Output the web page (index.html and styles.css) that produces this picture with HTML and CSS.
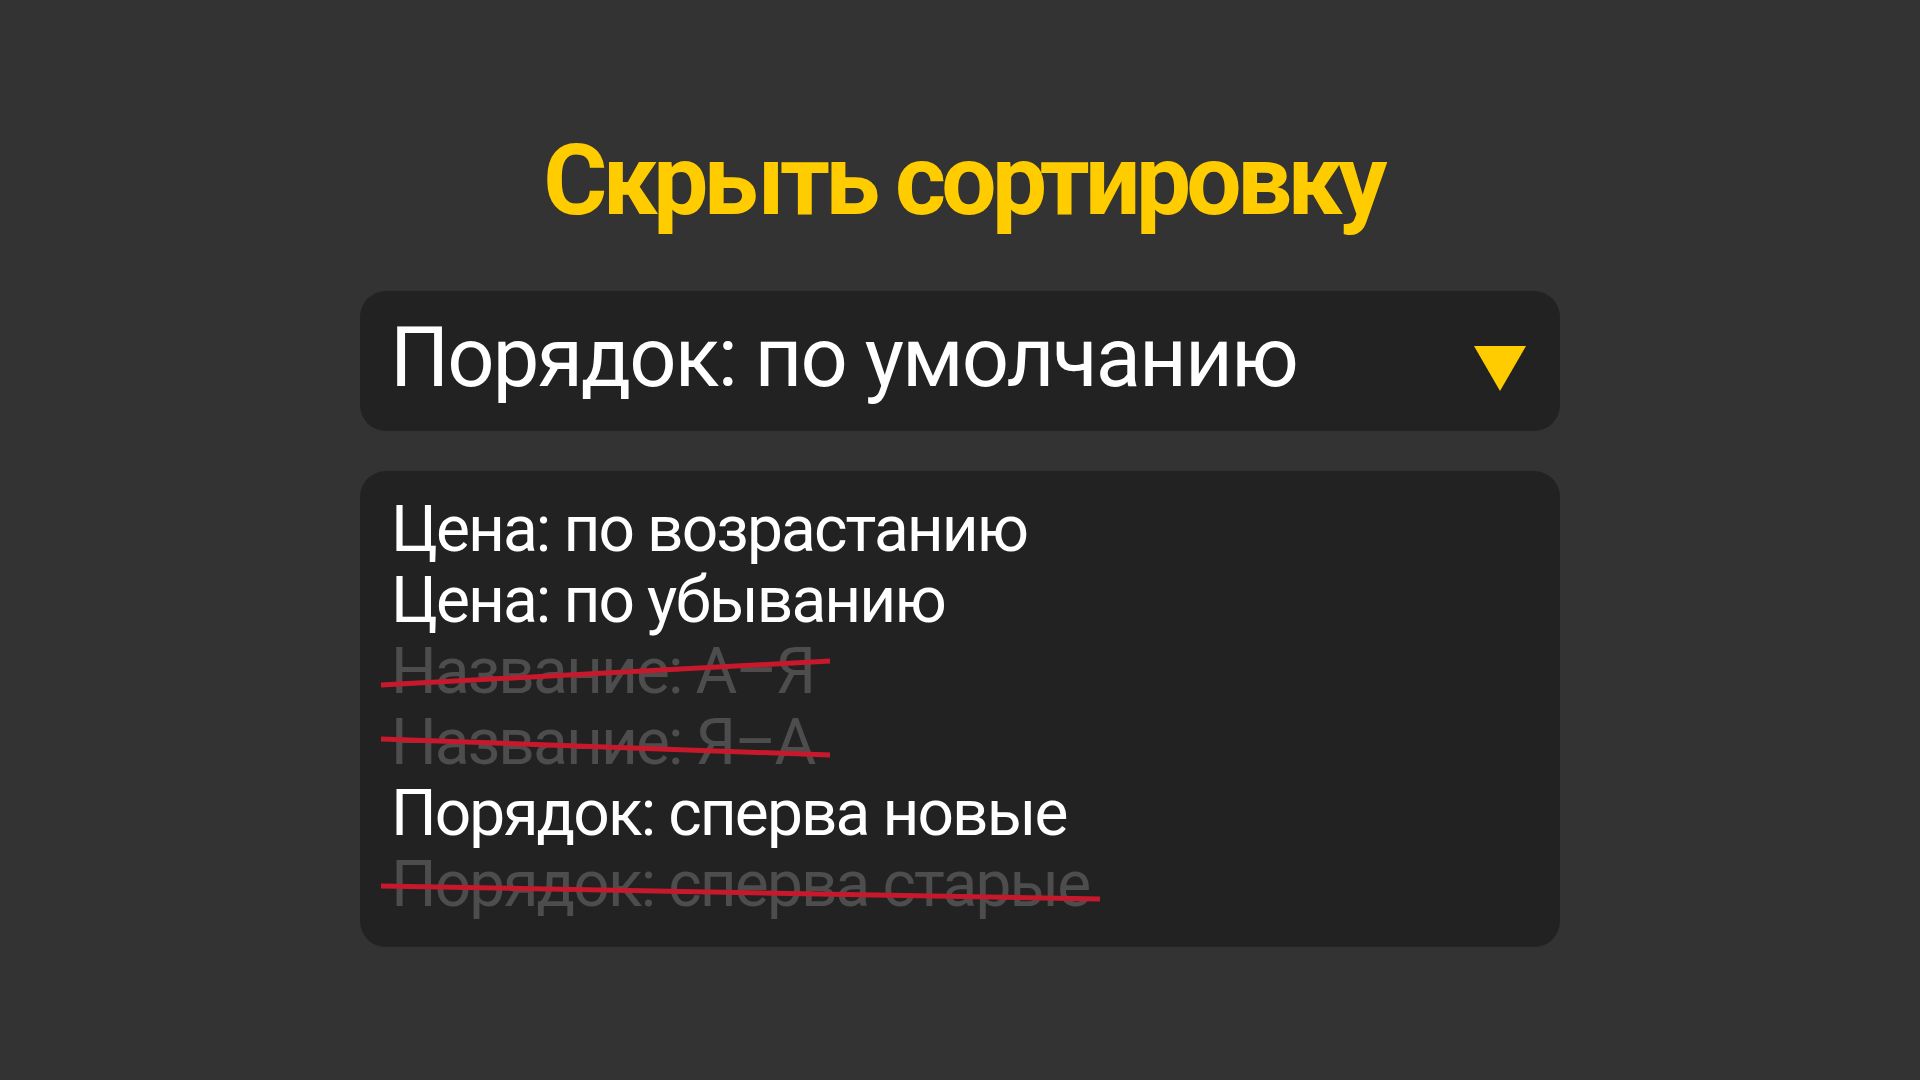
FILE: index.html
```html
<!DOCTYPE html>
<html lang="ru">
<head>
  <meta charset="UTF-8" />
  <meta name="viewport" content="width=device-width, initial-scale=1.0" />
  <title>Скрыть сортировку</title>
  <link rel="stylesheet" href="styles.css">
</head>
<body>
  <div id="page">
    <h1 id="title">Скрыть сортировку</h1>

    <div id="sortSelect">
      <span class="current">Порядок: по умолчанию</span>
      <svg class="arrow" width="52" height="45" viewBox="0 0 52 45">
        <polygon points="0,0 52,0 26,45" />
      </svg>
    </div>

    <ul id="sortOptions">
      <li>Цена: по возрастанию</li>
      <li>Цена: по убыванию</li>
      <li class="hidden-option">Название: А–Я
        <svg class="strike" viewBox="0 0 1200 71"><line x1="21" y1="49" x2="470" y2="25" /></svg>
      </li>
      <li class="hidden-option">Название: Я–А
        <svg class="strike" viewBox="0 0 1200 71"><line x1="21" y1="32" x2="470" y2="48" /></svg>
      </li>
      <li>Порядок: сперва новые</li>
      <li class="hidden-option">Порядок: сперва старые
        <svg class="strike" viewBox="0 0 1200 71"><line x1="21" y1="37" x2="740" y2="50" /></svg>
      </li>
    </ul>
  </div>
</body>
</html>
```

FILE: styles.css
```css
html, body {
  margin: 0;
  padding: 0;
  height: 100%;
  background: #333333;
  font-family: Roboto, 'Noto Sans', sans-serif;
  color: #ffffff;
  overflow: hidden;
}
#page {
  width: 1200px;
  margin: 0 auto;
  padding-top: 132px;
}
#title {
  margin: 0;
  padding-left: 6px;
  font-size: 98px;
  line-height: 1;
  font-weight: 700;
  letter-spacing: -4.7px;
  text-align: center;
  color: #ffcc00;
}
#sortSelect {
  margin-top: 61px;
  box-sizing: border-box;
  height: 140px;
  padding: 25px 34px 0 30px;
  display: flex;
  justify-content: space-between;
  align-items: flex-start;
  background: #222222;
  border-radius: 26px;
}
#sortSelect .current {
  font-size: 83px;
  line-height: 83px;
  letter-spacing: -1.9px;
}
#sortSelect .arrow {
  margin-top: 30px;
  fill: #ffcc00;
}
#sortOptions {
  list-style: none;
  margin: 40px 0 0;
  padding: 23px 0 27px;
  background: #222222;
  border-radius: 26px;
}
#sortOptions li {
  position: relative;
  height: 71px;
  padding-left: 31px;
  font-size: 64px;
  line-height: 71px;
  letter-spacing: -1.9px;
  white-space: nowrap;
}
#sortOptions li.hidden-option {
  color: #4d4d4d;
}
/* red crossing line drawn over a disabled option */
.strike {
  position: absolute;
  left: 0;
  top: 0;
  width: 1200px;
  height: 71px;
}
.strike line {
  stroke: #c8192c;
  stroke-width: 5;
}
```
